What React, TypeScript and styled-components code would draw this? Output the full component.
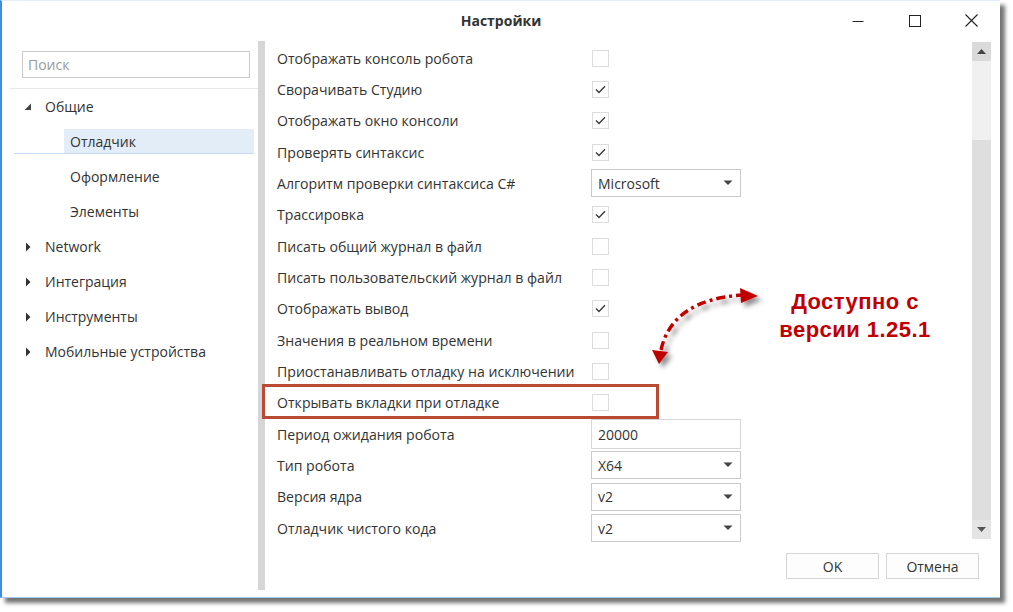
import React from "react";
import styled, { createGlobalStyle } from "styled-components";

const UI_FONT = `"Open Sans", "Noto Sans", "DejaVu Sans", sans-serif`;

const Global = createGlobalStyle`
  html, body { margin: 0; padding: 0; background: #ffffff; }
  body { width: 1013px; height: 612px; overflow: hidden; font-family: ${UI_FONT}; color: #333; }
  * { box-sizing: border-box; }
`;

const Stage = styled.div`
  position: relative;
  width: 1013px;
  height: 612px;
  background: #fff;
`;

const Window = styled.div`
  width: 1000px;
  height: 598px;
  background: #fff;
  border-left: 2px solid #3d8fdb;
  border-top: 1px solid #e4eef8;
  border-bottom: 1px solid #a9cbea;
  box-shadow: 5px 5px 4px rgba(0, 0, 0, 0.55);
  display: flex;
  flex-direction: column;
  padding-bottom: 7px;
`;

const TitleBar = styled.div`
  height: 40px;
  display: grid;
  grid-template-columns: 1fr auto 1fr;
  align-items: center;
`;

const Title = styled.div`
  grid-column: 2;
  font-size: 14px;
  font-weight: 700;
  color: #333;
  padding-bottom: 1px;
`;

const Controls = styled.div`
  grid-column: 3;
  justify-self: end;
  display: flex;
  height: 40px;
`;

const CtrlButton = styled.div`
  width: 57px;
  height: 40px;
  display: flex;
  align-items: center;
  justify-content: center;
  padding-bottom: 1px;
`;

const Body = styled.div`
  flex: 1;
  display: flex;
  min-height: 0;
`;

const LeftPanel = styled.div`
  width: 256px;
  padding-top: 10px;
  display: flex;
  flex-direction: column;
`;

const SearchBox = styled.div`
  margin: 0 8px 0 20px;
  height: 27px;
  border: 1px solid #cbcbcb;
  display: flex;
  align-items: center;
  padding-left: 5px;
  font-size: 14px;
  color: #9a9a9a;
`;

const Separator = styled.div`
  margin: 10px 0 0 8px;
  height: 1px;
  background: #e8e8e8;
`;

const TreeRow = styled.div<{ $indent: number }>`
  height: 35px;
  display: flex;
  align-items: center;
  padding-left: ${(p) => p.$indent}px;
  font-size: 14px;
  color: #333;
`;

const Expander = styled.span`
  width: 8px;
  height: 10px;
  margin-right: 13px;
  display: inline-flex;
  align-items: center;
`;

const SelectedLine = styled.div`
  margin-left: 12px;
  margin-right: 4px;
  flex: 1;
  height: 25px;
  border-bottom: 1px solid #c6dbef;
  display: flex;
`;

const SelectedTint = styled.div`
  margin-left: 50px;
  flex: 1;
  background: #e2edf7;
  display: flex;
  align-items: center;
  padding-left: 6px;
`;

const Splitter = styled.div`
  width: 7px;
  background: #d6d6d6;
`;

const RightPanel = styled.div`
  flex: 1;
  display: flex;
  flex-direction: column;
`;

const ScrollRegion = styled.div`
  height: 498px;
  display: flex;
`;

const SettingsList = styled.div`
  flex: 1;
  padding: 1.5px 0 0 12px;
`;

const SettingRow = styled.div`
  height: 31.33px;
  display: grid;
  grid-template-columns: 314px 150px;
  align-items: center;
`;

const Label = styled.div`
  font-size: 14.1px;
  color: #333;
  white-space: nowrap;
`;

const CheckBox = styled.div`
  width: 17px;
  height: 17px;
  margin-left: 1px;
  border: 1px solid #dcdcdc;
  background: #fff;
  display: flex;
  align-items: center;
  justify-content: center;
`;

const Field = styled.div<{ $h: number }>`
  height: ${(p) => p.$h}px;
  width: 150px;
  border: 1px solid ${(p) => (p.$h > 28 ? "#d6d6d6" : "#cacaca")};
  background: #fff;
  display: flex;
  align-items: center;
  justify-content: space-between;
  padding: 0 7px 0 6px;
  font-size: 14px;
  color: #333;
`;

const ScrollBar = styled.div`
  width: 19px;
  margin: 1px 9px 0 0;
  display: flex;
  flex-direction: column;
`;

const ScrollBtn = styled.div<{ $bg: string }>`
  height: 19px;
  background: ${(p) => p.$bg};
  display: flex;
  align-items: center;
  justify-content: center;
`;

const ScrollTrack = styled.div<{ $bg: string; $h?: number }>`
  background: ${(p) => p.$bg};
  ${(p) => (p.$h ? `height: ${p.$h}px;` : "flex: 1;")}
`;

const Footer = styled.div`
  flex: 1;
  display: flex;
  justify-content: flex-end;
  align-items: flex-start;
  gap: 7px;
  padding: 14px 21px 0 0;
`;

const DialogButton = styled.div`
  width: 93px;
  height: 26px;
  border: 1px solid #d5d5d5;
  background: #fdfdfd;
  display: flex;
  align-items: center;
  justify-content: center;
  font-size: 14px;
  color: #333;
`;

const HighlightFrame = styled.div`
  position: absolute;
  left: 262px;
  top: 384px;
  width: 397px;
  height: 35px;
  border: 3px solid #bb4a33;
`;

const Callout = styled.div`
  position: absolute;
  left: 755px;
  top: 288px;
  width: 200px;
  text-align: center;
  font-family: "Liberation Sans", Arial, sans-serif;
  font-weight: 700;
  font-size: 22px;
  letter-spacing: 0.45px;
  line-height: 28px;
  color: #c00000;
`;

const ArrowLayer = styled.svg`
  position: absolute;
  left: 0;
  top: 0;
  pointer-events: none;
`;

const Check = () => (
  <svg width="11" height="9" viewBox="0 0 11 9">
    <path d="M1 4.5 L4 7.5 L10 1.2" fill="none" stroke="#3a3a3a" strokeWidth="1.4" />
  </svg>
);

const DropArrow = () => (
  <svg width="10" height="6" viewBox="0 0 10 6">
    <path d="M0.5 0.5 H9.5 L5 5 Z" fill="#444" />
  </svg>
);

const ExpandedIcon = () => (
  <svg width="8" height="8" viewBox="0 0 8 8">
    <path d="M7 0.5 V7 H0.5 Z" fill="#444" />
  </svg>
);

const CollapsedIcon = () => (
  <svg width="8" height="10" viewBox="0 0 8 10">
    <path d="M2 0.5 L6.5 5 L2 9.5 Z" fill="#333" />
  </svg>
);

type Setting =
  | { label: string; kind: "check"; checked: boolean }
  | { label: string; kind: "select"; value: string }
  | { label: string; kind: "input"; value: string };

const settings: Setting[] = [
  { label: "Отображать консоль робота", kind: "check", checked: false },
  { label: "Сворачивать Студию", kind: "check", checked: true },
  { label: "Отображать окно консоли", kind: "check", checked: true },
  { label: "Проверять синтаксис", kind: "check", checked: true },
  { label: "Алгоритм проверки синтаксиса C#", kind: "select", value: "Microsoft" },
  { label: "Трассировка", kind: "check", checked: true },
  { label: "Писать общий журнал в файл", kind: "check", checked: false },
  { label: "Писать пользовательский журнал в файл", kind: "check", checked: false },
  { label: "Отображать вывод", kind: "check", checked: true },
  { label: "Значения в реальном времени", kind: "check", checked: false },
  { label: "Приостанавливать отладку на исключении", kind: "check", checked: false },
  { label: "Открывать вкладки при отладке", kind: "check", checked: false },
  { label: "Период ожидания робота", kind: "input", value: "20000" },
  { label: "Тип робота", kind: "select", value: "X64" },
  { label: "Версия ядра", kind: "select", value: "v2" },
  { label: "Отладчик чистого кода", kind: "select", value: "v2" },
];

const topLevel = ["Network", "Интеграция", "Инструменты", "Мобильные устройства"];

export default function App() {
  return (
    <Stage>
      <Global />
      <Window>
        <TitleBar>
          <Title>Настройки</Title>
          <Controls>
            <CtrlButton>
              <svg width="12" height="12" viewBox="0 0 12 12">
                <path d="M0.5 6.5 H11.5" stroke="#222" strokeWidth="1" />
              </svg>
            </CtrlButton>
            <CtrlButton>
              <svg width="12" height="12" viewBox="0 0 12 12">
                <rect x="0.5" y="0.5" width="11" height="11" fill="none" stroke="#222" strokeWidth="1" />
              </svg>
            </CtrlButton>
            <CtrlButton>
              <svg width="13" height="13" viewBox="0 0 13 13">
                <path d="M0.5 0.5 L12.5 12.5 M12.5 0.5 L0.5 12.5" stroke="#222" strokeWidth="1.1" />
              </svg>
            </CtrlButton>
          </Controls>
        </TitleBar>
        <Body>
          <LeftPanel>
            <SearchBox>Поиск</SearchBox>
            <Separator />
            <TreeRow $indent={22}>
              <Expander>
                <ExpandedIcon />
              </Expander>
              Общие
            </TreeRow>
            <TreeRow $indent={0}>
              <SelectedLine>
                <SelectedTint>Отладчик</SelectedTint>
              </SelectedLine>
            </TreeRow>
            <TreeRow $indent={68}>Оформление</TreeRow>
            <TreeRow $indent={68}>Элементы</TreeRow>
            {topLevel.map((t) => (
              <TreeRow key={t} $indent={22}>
                <Expander>
                  <CollapsedIcon />
                </Expander>
                {t}
              </TreeRow>
            ))}
          </LeftPanel>
          <Splitter />
          <RightPanel>
            <ScrollRegion>
              <SettingsList>
                {settings.map((s) => (
                  <SettingRow key={s.label}>
                    <Label>{s.label}</Label>
                    {s.kind === "check" && <CheckBox>{s.checked && <Check />}</CheckBox>}
                    {s.kind === "select" && (
                      <Field $h={28}>
                        <span>{s.value}</span>
                        <DropArrow />
                      </Field>
                    )}
                    {s.kind === "input" && (
                      <Field $h={30}>
                        <span>{s.value}</span>
                      </Field>
                    )}
                  </SettingRow>
                ))}
              </SettingsList>
              <ScrollBar>
                <ScrollBtn $bg="#dadada">
                  <svg width="9" height="5" viewBox="0 0 9 5">
                    <path d="M0 5 H9 L4.5 0 Z" fill="#444" />
                  </svg>
                </ScrollBtn>
                <ScrollTrack $bg="#f0f0f0" $h={79} />
                <ScrollTrack $bg="#dedede" />
                <ScrollBtn $bg="#e4e4e4">
                  <svg width="9" height="5" viewBox="0 0 9 5">
                    <path d="M0 0 H9 L4.5 5 Z" fill="#555" />
                  </svg>
                </ScrollBtn>
              </ScrollBar>
            </ScrollRegion>
            <Footer>
              <DialogButton>OK</DialogButton>
              <DialogButton>Отмена</DialogButton>
            </Footer>
          </RightPanel>
        </Body>
      </Window>

      <HighlightFrame />
      <ArrowLayer width="1013" height="612" viewBox="0 0 1013 612">
        <defs>
          <filter id="arrowShadow" x="-20%" y="-20%" width="140%" height="140%">
            <feDropShadow dx="4" dy="4" stdDeviation="2.5" floodColor="#000" floodOpacity="0.45" />
          </filter>
        </defs>
        <g filter="url(#arrowShadow)">
          <path
            d="M661 350 Q 672 300 742 295"
            fill="none"
            stroke="#c00000"
            strokeWidth="3.5"
            strokeDasharray="9 4 3 4"
          />
          <path d="M740 288 L758 296 L741 303 Z" fill="#c00000" />
          <path d="M652 350 L668 352 L659 364 Z" fill="#c00000" />
        </g>
      </ArrowLayer>
      <Callout>
        Доступно с
        <br />
        версии 1.25.1
      </Callout>
    </Stage>
  );
}
